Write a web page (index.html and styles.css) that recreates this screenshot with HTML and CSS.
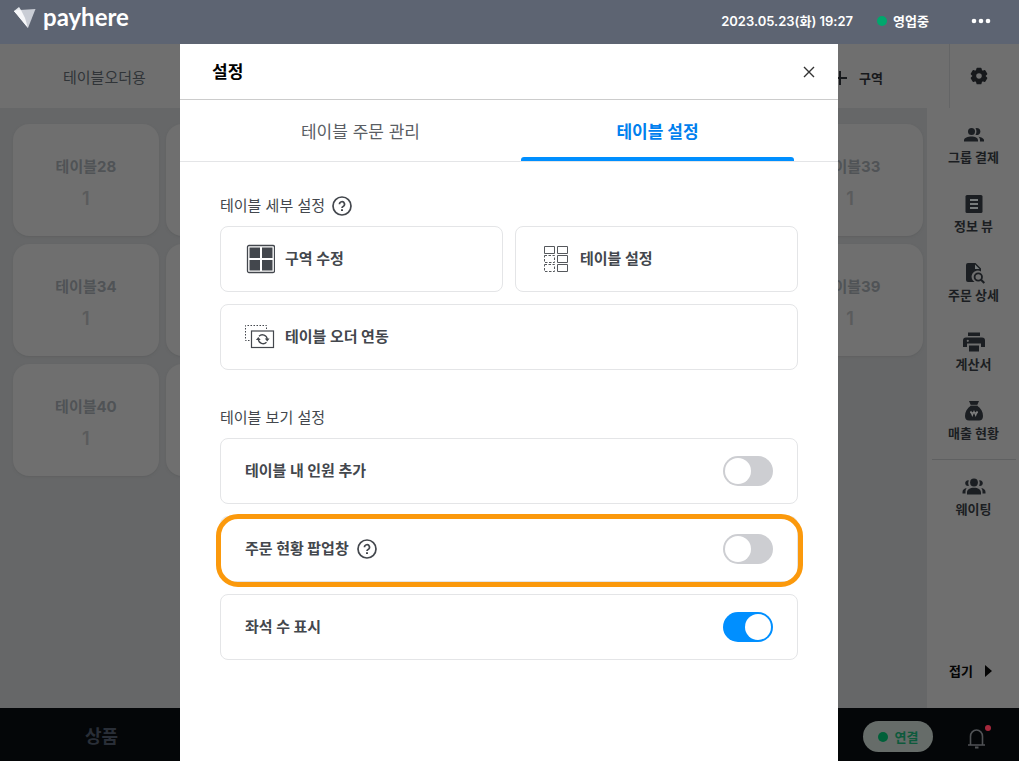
FILE: index.html
```html
<!DOCTYPE html>
<html lang="ko">
<head>
<meta charset="utf-8">
<meta name="viewport" content="width=device-width, initial-scale=1">
<title>payhere 설정</title>
<link rel="stylesheet" href="styles.css">
</head>
<body>
<div class="app">
  <header class="topbar">
    <div class="brand">
      <svg class="brand-mark" width="24" height="24" viewBox="0 0 24 24" aria-hidden="true">
        <path d="M1 5 L6 1 L8 4 L3 7 Z" fill="#e4e7ec"/>
        <path d="M1 5 L8 4 L15 22 Z" fill="#fff"/>
        <path d="M7 4 L22.500 3 L15 22 Z" fill="#c9cdd5"/>
        <path d="M1 5 L8 4 L12 12 L15 22 Z" fill="#f6f7f9"/>
      </svg>
      <span class="brand-name">payhere</span>
    </div>
    <time class="clock">2023.05.23(화) 19:27</time>
    <span class="status"><i class="dot"></i>영업중</span>
    <button class="more" type="button" aria-label="더보기">
      <svg width="20" height="6" viewBox="0 0 20 6" fill="#fff"><circle cx="3" cy="3" r="2.300"/><circle cx="10" cy="3" r="2.300"/><circle cx="17" cy="3" r="2.300"/></svg>
    </button>
  </header>

  <div class="stage">
    <div class="toolbar">
      <button class="area-tab" type="button">테이블오더용</button>
      <button class="add-area" type="button">
        <svg width="14" height="14" viewBox="0 0 14 14" stroke="#17191c" stroke-width="2"><path d="M7 0v14M0 7h14"/></svg>구역
      </button>
      <button class="gear" type="button" aria-label="환경설정">
        <svg width="18" height="18" viewBox="0 0 18 18"><path fill="#17191c" stroke="#17191c" stroke-width="1.400" stroke-linejoin="round" fill-rule="evenodd" d="M7.200 1.500h3.600l.6 2.200 1.200.7 2.200-.6 1.800 3.100L15 8.500v1l1.600 1.600-1.800 3.100-2.200-.6-1.200.7-.6 2.200H7.200l-.6-2.200-1.200-.7-2.200.6-1.800-3.100L3 9.500v-1L1.400 6.900l1.800-3.100 2.200.6 1.200-.7zM9 5.500a3.500 3.500 0 1 0 0 7 3.500 3.500 0 0 0 0-7z"/></svg>
      </button>
    </div>

    <main class="floor">
      <div class="table-card"><b>테이블28</b><span>1</span></div>
      <div class="table-card"></div><div class="table-card"></div><div class="table-card"></div><div class="table-card"></div>
      <div class="table-card"><b>테이블33</b><span>1</span></div>
      <div class="table-card"><b>테이블34</b><span>1</span></div>
      <div class="table-card"></div><div class="table-card"></div><div class="table-card"></div><div class="table-card"></div>
      <div class="table-card"><b>테이블39</b><span>1</span></div>
      <div class="table-card"><b>테이블40</b><span>1</span></div>
      <div class="table-card"></div>
    </main>

    <nav class="side">
      <button class="side-item" type="button">
        <svg width="24" height="24" viewBox="0 0 24 24" fill="#1b1e22"><circle cx="9.500" cy="8.500" r="3.500"/><path d="M2 18.500v-1.200c0-2.600 4-3.800 7.500-3.800s6.500 1.200 6.500 3.800v1.200zM13.500 5.300a3.500 3.500 0 1 1 0 6.400c1.300-1.700 1.300-4.700 0-6.400zM16.500 13.700c2.700.4 5.500 1.500 5.500 3.600v1.200h-4v-1.200c0-1.600-.5-2.700-1.500-3.600z"/></svg>그룹 결제</button>
      <button class="side-item" type="button">
        <svg width="24" height="24" viewBox="0 0 24 24"><rect x="3.500" y="3" width="17" height="18" rx="1.500" fill="#1b1e22"/><path d="M8 8h8M8 12h8M8 16h8" stroke="#777b7c" stroke-width="2"/></svg>정보 뷰</button>
      <button class="side-item" type="button">
        <svg width="24" height="24" viewBox="0 0 24 24"><path d="M4 4a2 2 0 0 1 2-2h7.500L19 7.500v3A6 6 0 0 0 12.500 21H6a2 2 0 0 1-2-2z" fill="#1b1e22"/><path d="M13 3.500V8h4.500z" fill="#777b7c"/><circle cx="16.300" cy="16" r="3.700" fill="none" stroke="#1b1e22" stroke-width="1.800"/><path d="M19 18.700l3.300 3.300" stroke="#1b1e22" stroke-width="2"/></svg>주문 상세</button>
      <button class="side-item" type="button">
        <svg width="24" height="24" viewBox="0 0 24 24" fill="#1b1e22"><path d="M6 2.500h12v3.500H6zM4 7.500h16a3 3 0 0 1 3 3V17h-4v-3.500H5V17H1v-6.500a3 3 0 0 1 3-3zM7 15.500h10v6H7z"/><circle cx="5.800" cy="10.800" r="1.100" fill="#6f6f6f"/></svg>계산서</button>
      <button class="side-item" type="button">
        <svg width="24" height="24" viewBox="0 0 24 24"><path d="M7 2h10l-2 4.500c4 2.500 6 6.500 6 10.500 0 3-1.500 4.500-4 4.500H7c-2.500 0-4-1.500-4-4.500 0-4 2-8 6-10.500z" fill="#1b1e22"/><path d="M9 6.300h6" stroke="#6f6f6f" stroke-width=".8"/><path d="M8.800 12l1.500 4.500 1.700-4 1.700 4 1.500-4.500M8 13.800h8" fill="none" stroke="#858585" stroke-width="1.100"/></svg>매출 현황</button>
      <hr class="side-rule">
      <button class="side-item" type="button">
        <svg width="24" height="24" viewBox="0 0 24 24" fill="#1b1e22"><circle cx="12" cy="7.500" r="3.900"/><path d="M5 19.500v-2c0-3 3-4.800 7-4.800s7 1.800 7 4.800v2zM6.800 5.300C4.500 5 3.200 6.500 3.200 8.300s1.500 3 3.600 2.700a7 7 0 0 1 0-5.700zM17.200 5.300c2.300-.3 3.600 1.200 3.600 3s-1.500 3-3.600 2.700a7 7 0 0 0 0-5.700zM4.800 13C2 13.500.5 15 .5 17v1.500h3V17c0-1.600.4-2.900 1.300-4zM19.200 13c2.800.5 4.300 2 4.300 4v1.500h-3V17c0-1.600-.4-2.900-1.300-4z"/></svg>웨이팅</button>
      <button class="fold" type="button">접기<svg width="7" height="12" viewBox="0 0 7 12"><path d="M0 0l7 6-7 6z" fill="#050505"/></svg></button>
    </nav>
  </div>

  <footer class="bottombar">
    <button class="product" type="button">상품</button>
    <span class="link-state"><i class="dot dot-dim"></i>연결</span>
    <button class="bell" type="button" aria-label="알림">
      <svg width="26" height="26" viewBox="0 0 26 26" fill="none" stroke="#505255" stroke-width="1.600"><path d="M3 21h17M5.500 21v-8.500a6 6.500 0 0 1 12 0V21"/><path d="M10 23.500h3.500" stroke-width="2"/><circle cx="23" cy="4" r="3" fill="#a5283c" stroke="none"/></svg>
    </button>
  </footer>

  <section class="modal" role="dialog" aria-labelledby="modal-title">
    <div class="modal-head">
      <h1 id="modal-title">설정</h1>
      <button class="close" type="button" aria-label="닫기">
        <svg width="12" height="12" viewBox="0 0 12 12" stroke="#333" stroke-width="1.400"><path d="M1 1l10 10M11 1L1 11"/></svg>
      </button>
    </div>
    <div class="tabs" role="tablist">
      <button class="tab" type="button" role="tab" aria-selected="false">테이블 주문 관리</button>
      <button class="tab tab-on" type="button" role="tab" aria-selected="true">테이블 설정</button>
    </div>
    <div class="modal-body">
      <h2 class="group-title">테이블 세부 설정
        <button class="help" type="button" aria-label="도움말"><svg width="20" height="20" viewBox="0 0 20 20" fill="none" stroke="#43474d" stroke-width="1.700"><circle cx="10" cy="10" r="9"/><path d="M7.500 8.300a2.500 2.500 0 1 1 3.700 2.100c-.8.500-1.200.8-1.200 1.700"/><path d="M10 13.200v1.900" stroke-width="2"/></svg></button>
      </h2>
      <div class="actions">
        <button class="card" type="button">
          <svg width="30" height="30" viewBox="0 0 30 30"><rect x="2.500" y="1.500" width="27" height="27" rx="1.500" fill="#fff" stroke="#43474d" stroke-width="1.300"/><path fill="#43474d" d="M4.500 3.500h10.500v10.500H4.500zM17 3.500h10.500v10.500H17zM4.500 16h10.500v10.500H4.500zM17 16h10.500v10.500H17z"/></svg>구역 수정</button>
        <button class="card" type="button">
          <svg width="30" height="30" viewBox="0 0 30 30" fill="none" stroke="#55585c"><path d="M4.500 2.500h10v7h-10zM17.500 2.500h10v7h-10zM17.500 11.500h10v7h-10zM17.500 20.500h10v7h-10z"/><path stroke-dasharray="2.500 1.500" d="M4.500 11.500h10v7h-10zM4.500 20.500h10v7h-10z"/></svg>테이블 설정</button>
        <button class="card card-wide" type="button">
          <svg width="30" height="30" viewBox="0 0 30 30" fill="none" stroke="#43474d"><path stroke-dasharray="1.500 1.500" d="M21.500 7V3.500H.5V18.500H6"/><rect x="6.500" y="9" width="22" height="16.500" stroke-width="1.200"/><path stroke-width="1.300" d="M14 14.200a4.800 4.800 0 0 1 8.200 3M21.500 20.300a4.800 4.800 0 0 1-8.200-3"/><path fill="#43474d" stroke="none" d="M19.800 16.500h4.800l-2.400 2.900zM10.900 18h4.800l-2.400-2.900z"/></svg>테이블 오더 연동</button>
      </div>

      <h2 class="group-title">테이블 보기 설정</h2>
      <div class="options">
        <div class="card">
          <label for="opt-people">테이블 내 인원 추가</label>
          <input class="switch" id="opt-people" type="checkbox" role="switch">
        </div>
        <div class="card card-marked">
          <label for="opt-popup">주문 현황 팝업창</label>
          <button class="help" type="button" aria-label="도움말"><svg width="20" height="20" viewBox="0 0 20 20" fill="none" stroke="#43474d" stroke-width="1.700"><circle cx="10" cy="10" r="9"/><path d="M7.500 8.300a2.500 2.500 0 1 1 3.700 2.100c-.8.500-1.200.8-1.200 1.700"/><path d="M10 13.200v1.900" stroke-width="2"/></svg></button>
          <input class="switch" id="opt-popup" type="checkbox" role="switch">
        </div>
        <div class="card">
          <label for="opt-seats">좌석 수 표시</label>
          <input class="switch" id="opt-seats" type="checkbox" role="switch" checked>
        </div>
      </div>
    </div>
  </section>
</div>
</body>
</html>
```
FILE: styles.css
```css
* {
  box-sizing: border-box;
}

body {
  margin: 0;
  font-family: Inter, "Noto Sans CJK KR", sans-serif;
  font-size: 15px;
  line-height: 22px;
  color: #43474d;
}

button {
  margin: 0;
  padding: 0;
  border: 0;
  background: none;
  color: inherit;
  font: inherit;
  cursor: pointer;
}

svg {
  display: block;
  flex: none;
}

h1,
h2 {
  margin: 0;
}

.app {
  position: relative;
  display: grid;
  grid-template-rows: 44px 1fr 53px;
  min-height: 100vh;
}

/* Top bar */
.topbar {
  display: flex;
  align-items: center;
  padding: 0 28px 3px 13px;
  background: #5d6472;
  color: #fff;
  font-size: 13px;
  font-weight: 700;
}

.brand {
  display: flex;
  align-items: center;
  gap: 6px;
  margin-right: auto;
  padding-bottom: 6px;
}

.brand-name {
  padding-bottom: 2px;
  font-family: Lato, sans-serif;
  font-size: 24px;
  line-height: 26px;
}

.clock {
  font-weight: 600;
}

.status {
  display: flex;
  align-items: center;
  gap: 6px;
  margin: 0 42px 0 24px;
}

.dot {
  width: 10px;
  height: 10px;
  border-radius: 50%;
  background: #00a76d;
}

/* Table floor behind the dialog */
.stage {
  display: grid;
  grid-template: 64px 1fr / 1fr 92px;
  background: #666768;
}

.toolbar {
  grid-column: 1 / -1;
  display: flex;
  align-items: center;
  background: #6f6f6f;
  color: #303438;
}

.area-tab {
  margin: 0 auto 0 63px;
  padding-top: 3px;
}

.add-area {
  display: flex;
  align-items: center;
  gap: 12px;
  margin-right: 66px;
  padding-top: 3px;
  color: #17191c;
  font-size: 13px;
  font-weight: 700;
}

.gear {
  display: flex;
  align-items: center;
  justify-content: center;
  width: 70px;
  height: 64px;
  padding-right: 12px;
  border-left: 1px solid #646566;
}

.floor {
  display: grid;
  grid-template-columns: repeat(6, 1fr);
  grid-auto-rows: 112px;
  align-content: start;
  gap: 8px 7px;
  padding: 16px 4px 16px 13px;
}

.table-card {
  display: flex;
  flex-direction: column;
  align-items: center;
  gap: 10px;
  padding-top: 32px;
  border-radius: 16px;
  background: #6f6f6f;
  box-shadow: 0 1px 2px #5f6061;
  color: #505356;
  font-size: 15px;
}

.table-card span {
  color: #5a5b5c;
  font-size: 18px;
  font-weight: 600;
}

.side {
  display: flex;
  flex-direction: column;
  padding: 15px 0 0 1px;
  background: #6f6f6f;
  color: #1b1e22;
  font-size: 13px;
  font-weight: 700;
  line-height: 20px;
}

.side-item {
  display: flex;
  flex-direction: column;
  align-items: center;
  height: 69px;
}

.side-rule {
  width: 84px;
  margin: -9px auto 15px;
  border: 0;
  border-top: 1px solid #5f6061;
}

.fold {
  display: flex;
  align-items: center;
  justify-content: center;
  gap: 12px;
  margin: auto 6px 27px 0;
  color: #050505;
}

.bottombar {
  display: flex;
  align-items: center;
  padding: 4px 28px 0 85px;
  background: #040608;
}

.product {
  margin-right: auto;
  color: #292e37;
  font-size: 18px;
  font-weight: 700;
}

.link-state {
  display: flex;
  align-items: center;
  justify-content: center;
  gap: 7px;
  width: 70px;
  height: 31px;
  margin-right: 32px;
  border-radius: 16px;
  background: #666c69;
  color: #0d5a3c;
  font-size: 13px;
  font-weight: 700;
}

.dot-dim {
  background: #006039;
}

/* Settings dialog */
.modal {
  position: absolute;
  inset: 44px 181px 0 180px;
  background: #fff;
}

.modal-head {
  display: flex;
  align-items: center;
  justify-content: space-between;
  height: 56px;
  padding: 0 23px 0 32px;
  border-bottom: 1px solid #ccc;
}

.modal-head h1 {
  color: #000;
  font-size: 17px;
  line-height: 24px;
}

.tabs {
  display: grid;
  grid-template-columns: 1fr 1fr;
  gap: 24px;
  height: 62px;
  padding: 0 44px;
  border-bottom: 1px solid #e4e5e7;
}

.tab {
  position: relative;
  padding-top: 2px;
  color: #5a5e64;
  font-size: 17px;
}

.tab-on {
  color: #0080ee;
  font-weight: 700;
}

.tab-on::after {
  content: "";
  position: absolute;
  inset: auto 0 0;
  height: 4px;
  border-radius: 3px 3px 0 0;
  background: #008fff;
}

.modal-body {
  padding: 32px 40px;
}

.group-title {
  display: flex;
  align-items: center;
  gap: 7px;
  height: 24px;
  margin-bottom: 8px;
  font-size: 15px;
  font-weight: 400;
}

.actions,
.options {
  display: grid;
  gap: 12px;
}

.actions {
  grid-template-columns: 1fr 1fr;
  margin-bottom: 36px;
}

.card {
  position: relative;
  display: flex;
  align-items: center;
  gap: 10px;
  height: 66px;
  padding: 0 24px;
  border: 1px solid #e4e5e7;
  border-radius: 8px;
  background: #fff;
  font-weight: 700;
}

.card-wide {
  grid-column: 1 / -1;
}

.card-marked {
  gap: 8px;
}

.card-marked::after {
  content: "";
  position: absolute;
  inset: -3px -6px -6px -5px;
  border: 5px solid #fb990c;
  border-radius: 22px;
  pointer-events: none;
}

.switch {
  appearance: none;
  width: 50px;
  height: 30px;
  margin: 0 0 0 auto;
  padding: 2px;
  border-radius: 15px;
  background: #cdced2;
  cursor: pointer;
}

.switch::before {
  content: "";
  display: block;
  width: 26px;
  height: 26px;
  border-radius: 50%;
  background: #fff;
}

.switch:checked {
  background: #008fff;
}

.switch:checked::before {
  margin-left: auto;
}
```
